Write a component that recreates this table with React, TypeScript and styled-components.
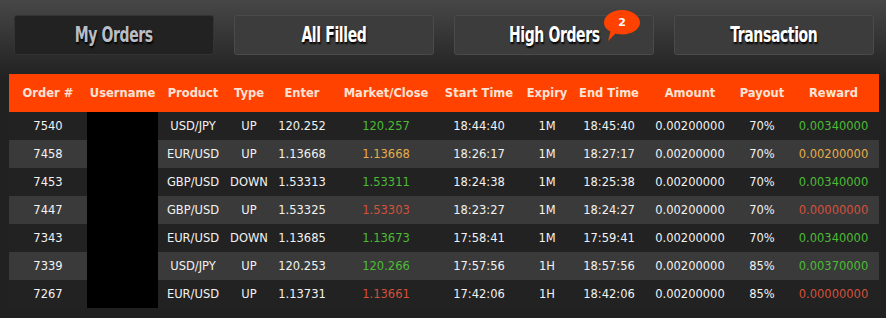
import React from "react";
import styled, { createGlobalStyle } from "styled-components";

const GlobalStyle = createGlobalStyle`
  html, body {
    margin: 0;
    padding: 0;
    background: #212121;
  }
`;

// full page, dark gradient from the top
const Page = styled.div`
  width: 886px;
  height: 318px;
  overflow: hidden;
  background: linear-gradient(#474747 0px, #2c2c2c 55px, #212121 80px, #212121 100%);
  padding: 15px 0 0 0;
  box-sizing: border-box;
`;

const TabBar = styled.nav`
  display: flex;
  gap: 20px;
  padding-left: 14px;
`;

const Tab = styled.div<{ $active?: boolean }>`
  position: relative;
  width: 200px;
  height: 40px;
  box-sizing: border-box;
  border-radius: 3px;
  border: 1px solid ${(p) => (p.$active ? "#333" : "#4a4a4a")};
  background: ${(p) => (p.$active ? "#222222" : "#3c3c3c")};
  display: flex;
  align-items: center;
  justify-content: center;
  color: ${(p) => (p.$active ? "#b9bec6" : "#ffffff")};
`;

// condensed display face: no Oswald offline, so squeeze a bold sans
const TabLabel = styled.span`
  display: inline-block;
  font-family: "DejaVu Sans Condensed", "DejaVu Sans", sans-serif;
  font-stretch: condensed;
  font-weight: bold;
  font-size: 21px;
  letter-spacing: -0.5px;
  transform: scaleX(0.74);
  text-shadow: 1px 2px 2px #000;
  white-space: nowrap;
`;

const Badge = styled.svg`
  position: absolute;
  left: 145px;
  top: -8px;
`;

const Table = styled.table`
  margin: 19px 0 0 9px;
  width: 870px;
  border-collapse: collapse;
  table-layout: fixed;
  font-family: "DejaVu Sans", Verdana, sans-serif;
  font-size: 11.5px;
`;

const HeadRow = styled.tr`
  background: #ff4200;
  height: 38px;
`;

const Th = styled.th`
  font-weight: bold;
  color: #fde3d6;
  font-size: 11.5px;
  text-align: center;
  padding: 0;
  white-space: nowrap;
`;

const Row = styled.tr<{ $alt: boolean }>`
  background: ${(p) => (p.$alt ? "#3a3a3a" : "#222222")};
  height: 28px;
`;

const Td = styled.td<{ $tone?: string; $hidden?: boolean }>`
  text-align: center;
  padding: 0;
  white-space: nowrap;
  color: ${(p) => p.$tone ?? "#f2f2f2"};
  background: ${(p) => (p.$hidden ? "#000" : "transparent")};
`;

const tones: Record<string, string> = {
  win: "#4cbc34",
  tie: "#e6ad48",
  loss: "#d4513a",
};

type Order = {
  id: string;
  product: string;
  type: string;
  enter: string;
  close: string;
  start: string;
  expiry: string;
  end: string;
  amount: string;
  payout: string;
  reward: string;
  result: "win" | "tie" | "loss";
};

const orders: Order[] = [
  { id: "7540", product: "USD/JPY", type: "UP", enter: "120.252", close: "120.257", start: "18:44:40", expiry: "1M", end: "18:45:40", amount: "0.00200000", payout: "70%", reward: "0.00340000", result: "win" },
  { id: "7458", product: "EUR/USD", type: "UP", enter: "1.13668", close: "1.13668", start: "18:26:17", expiry: "1M", end: "18:27:17", amount: "0.00200000", payout: "70%", reward: "0.00200000", result: "tie" },
  { id: "7453", product: "GBP/USD", type: "DOWN", enter: "1.53313", close: "1.53311", start: "18:24:38", expiry: "1M", end: "18:25:38", amount: "0.00200000", payout: "70%", reward: "0.00340000", result: "win" },
  { id: "7447", product: "GBP/USD", type: "UP", enter: "1.53325", close: "1.53303", start: "18:23:27", expiry: "1M", end: "18:24:27", amount: "0.00200000", payout: "70%", reward: "0.00000000", result: "loss" },
  { id: "7343", product: "EUR/USD", type: "DOWN", enter: "1.13685", close: "1.13673", start: "17:58:41", expiry: "1M", end: "17:59:41", amount: "0.00200000", payout: "70%", reward: "0.00340000", result: "win" },
  { id: "7339", product: "USD/JPY", type: "UP", enter: "120.253", close: "120.266", start: "17:57:56", expiry: "1H", end: "18:57:56", amount: "0.00200000", payout: "85%", reward: "0.00370000", result: "win" },
  { id: "7267", product: "EUR/USD", type: "UP", enter: "1.13731", close: "1.13661", start: "17:42:06", expiry: "1H", end: "18:42:06", amount: "0.00200000", payout: "85%", reward: "0.00000000", result: "loss" },
];

const columns: [string, number][] = [
  ["Order #", 78],
  ["Username", 71],
  ["Product", 70],
  ["Type", 42],
  ["Enter", 64],
  ["Market/Close", 104],
  ["Start Time", 82],
  ["Expiry", 54],
  ["End Time", 70],
  ["Amount", 92],
  ["Payout", 52],
  ["Reward", 91],
];

const App: React.FC = () => {
  return (
    <Page>
      <GlobalStyle />
      <TabBar>
        <Tab $active>
          <TabLabel>My Orders</TabLabel>
        </Tab>
        <Tab>
          <TabLabel>All Filled</TabLabel>
        </Tab>
        <Tab>
          <TabLabel>High Orders</TabLabel>
          <Badge width="44" height="38" viewBox="0 0 44 38">
            <path d="M22 2 C32 2 40 8 40 14.5 C40 21 32 26.5 22 26.5 C19.5 26.5 17.5 26.2 15.5 25.6 L8 33 L10.5 23.5 C6.3 21.5 4 18.3 4 14.5 C4 8 12 2 22 2 Z" fill="#ff4200" />
            <text x="22" y="18" textAnchor="middle" fill="#fff" fontSize="11" fontWeight="bold" fontFamily="'DejaVu Sans', sans-serif">2</text>
          </Badge>
        </Tab>
        <Tab>
          <TabLabel>Transaction</TabLabel>
        </Tab>
      </TabBar>
      <Table>
        <colgroup>
          {columns.map(([name, w]) => (
            <col key={name} style={{ width: w }} />
          ))}
        </colgroup>
        <thead>
          <HeadRow>
            {columns.map(([name]) => (
              <Th key={name}>{name}</Th>
            ))}
          </HeadRow>
        </thead>
        <tbody>
          {orders.map((o, i) => (
            <Row key={o.id} $alt={i % 2 === 1}>
              <Td>{o.id}</Td>
              <Td $hidden />
              <Td>{o.product}</Td>
              <Td>{o.type}</Td>
              <Td>{o.enter}</Td>
              <Td $tone={tones[o.result]}>{o.close}</Td>
              <Td>{o.start}</Td>
              <Td>{o.expiry}</Td>
              <Td>{o.end}</Td>
              <Td>{o.amount}</Td>
              <Td>{o.payout}</Td>
              <Td $tone={tones[o.result]}>{o.reward}</Td>
            </Row>
          ))}
        </tbody>
      </Table>
    </Page>
  );
};

export default App;
